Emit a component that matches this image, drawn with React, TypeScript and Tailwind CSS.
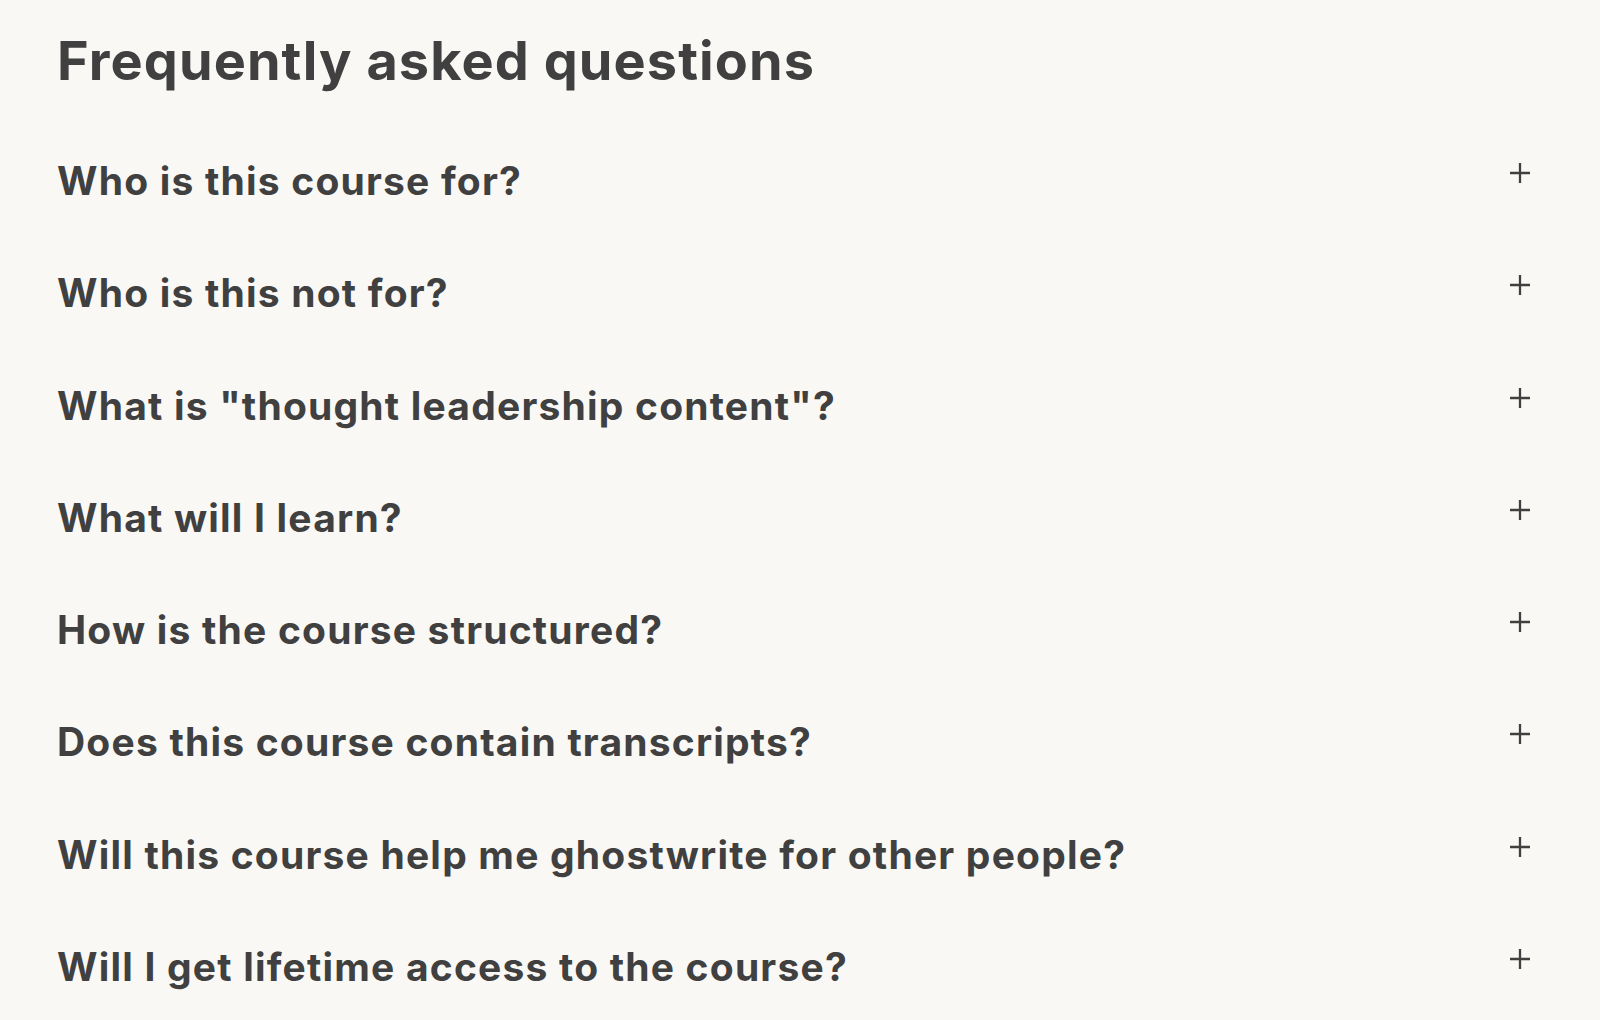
import React from 'react';

const questions = [
  'Who is this course for?',
  'Who is this not for?',
  'What is "thought leadership content"?',
  'What will I learn?',
  'How is the course structured?',
  'Does this course contain transcripts?',
  'Will this course help me ghostwrite for other people?',
  'Will I get lifetime access to the course?',
];

const PlusIcon: React.FC = () => (
  <svg width="22" height="22" viewBox="0 0 22 22" fill="none" stroke="#404040" strokeWidth="2.3">
    <path d="M11 1v20M1 11h20" />
  </svg>
);

const App: React.FC = () => {
  return (
    <div
      className="min-h-screen bg-[#f9f8f5] text-[#404040] px-[57px] pt-[34px]"
      style={{ fontFamily: 'Inter, "Noto Sans", sans-serif' }}
    >
      <h1 className="text-[54px] leading-[54px] font-bold tracking-[1.1px]">Frequently asked questions</h1>

      {/* FAQ list */}
      <div className="mt-[37px]">
        {questions.map((q, i) => (
          <div key={i} className="flex items-start justify-between py-[33px] cursor-pointer">
            <span className="text-[39px] leading-[46.3px] font-bold tracking-[1.2px]">{q}</span>
            <span className="mt-[4px] mr-[12px]">
              <PlusIcon />
            </span>
          </div>
        ))}
      </div>
    </div>
  );
};

export default App;
